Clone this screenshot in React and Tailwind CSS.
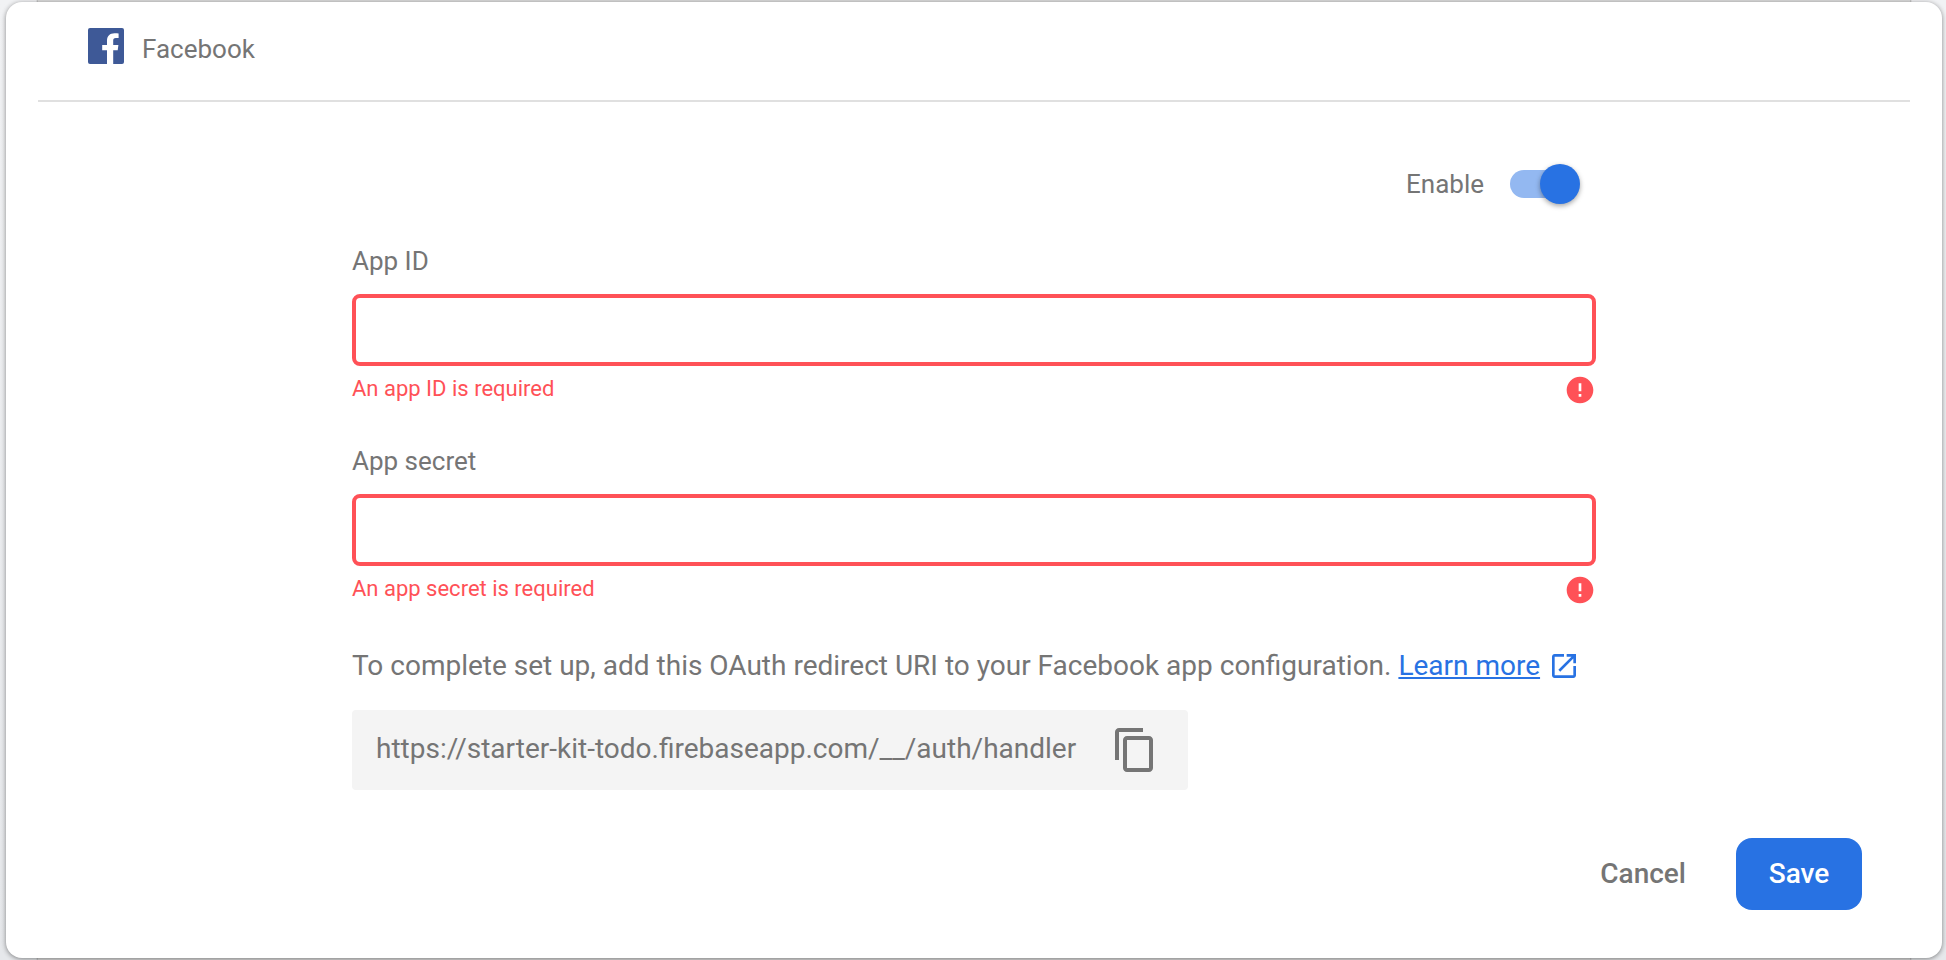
import { useId, useState } from "react";

function FacebookLogo() {
  return (
    <svg className="size-9" viewBox="0 0 36 36" aria-hidden="true">
      <rect width="36" height="36" rx="2" fill="#3e5997" />
      <path
        fill="#fff"
        d="M19 36V22.200h-4.800V17H19v-4.200C19 8 22 5.300 26.500 5.300c1.800 0 3.200.1 4.100.2v4.600h-2.700c-2.200 0-2.700 1-2.700 2.600V17h5.200l-.7 5.200h-4.500V36z"
      />
    </svg>
  );
}

function ErrorIcon() {
  return (
    <svg className="size-8 shrink-0" viewBox="0 0 24 24" fill="#ff5157" aria-hidden="true">
      <path d="M12 2C6.480 2 2 6.480 2 12s4.480 10 10 10 10-4.480 10-10S17.520 2 12 2zm1 15h-2v-2h2v2zm0-4h-2V7h2v6z" />
    </svg>
  );
}

function OpenInNewIcon() {
  return (
    <svg className="size-8 shrink-0" viewBox="0 0 24 24" fill="currentColor" aria-hidden="true">
      <path d="M19 19H5V5h7V3H5c-1.110 0-2 .9-2 2v14c0 1.100.89 2 2 2h14c1.100 0 2-.9 2-2v-7h-2v7zM14 3v2h3.590l-9.830 9.830 1.410 1.410L19 6.410V10h2V3h-7z" />
    </svg>
  );
}

function CopyIcon() {
  return (
    <svg className="size-12" viewBox="0 0 24 24" fill="currentColor" aria-hidden="true">
      <path d="M16 1H4c-1.100 0-2 .9-2 2v14h2V3h12V1zm3 4H8c-1.100 0-2 .9-2 2v14c0 1.100.9 2 2 2h11c1.100 0 2-.9 2-2V7c0-1.100-.9-2-2-2zm0 16H8V7h11v14z" />
    </svg>
  );
}

function Field({ label, error }) {
  const id = useId();
  const [value, setValue] = useState("");
  return (
    <div className="mb-[38px]">
      <label htmlFor={id} className="block text-[26px] leading-[34px]">
        {label}
      </label>
      <input
        id={id}
        type="text"
        value={value}
        onChange={(e) => setValue(e.target.value)}
        aria-invalid="true"
        aria-describedby={`${id}-error`}
        className="mt-4 block h-18 w-full rounded-lg border-4 border-[#ff5157] bg-white px-4 text-[26px] outline-none"
      />
      <div className="mt-2 flex h-8 items-start justify-between text-[#ff5157]">
        <p id={`${id}-error`} className="text-[22px] leading-[30px]">
          {error}
        </p>
        <ErrorIcon />
      </div>
    </div>
  );
}

function Toggle({ label }) {
  const [on, setOn] = useState(true);
  return (
    <label className="flex cursor-pointer items-center gap-[26px] text-[26px] leading-10">
      {label}
      <span className="relative flex h-10 w-[70px] items-center">
        <input
          type="checkbox"
          role="switch"
          checked={on}
          onChange={(e) => setOn(e.target.checked)}
          className="peer h-7 w-16 cursor-pointer appearance-none rounded-full bg-gray-300 checked:bg-[#93b8f1]"
        />
        <span className="pointer-events-none absolute left-0 top-0 size-10 rounded-full bg-white shadow-[0_2px_5px_rgba(0,0,0,0.35)] peer-checked:left-auto peer-checked:right-0 peer-checked:bg-[#2872e3]" />
      </span>
    </label>
  );
}

export default function App() {
  return (
    <div className="min-h-screen bg-[linear-gradient(#f1f2f4,#e6e8eb)] font-[Roboto,sans-serif] text-[#757575]">
      <div className="min-h-screen bg-[linear-gradient(90deg,transparent_36px,#b8b8b8_38px,#dcdcdc_38px,#dcdcdc_calc(100%-36px),#b8b8b8_calc(100%-36px),transparent_calc(100%-34px))] pb-[2px] pl-[6px] pr-1 pt-[2px]">
        <main className="flex min-h-[calc(100vh-4px)] flex-col rounded-2xl bg-white px-8 shadow-[0_1px_5px_rgba(0,0,0,0.45)]">
          <header className="flex h-[100px] items-center gap-[18px] border-b-2 border-[#e0e0e0] pb-[10px] pl-[50px]">
            <FacebookLogo />
            <h1 className="pt-[6px] text-[26px] leading-8">Facebook</h1>
          </header>

          <form className="flex flex-1 flex-col" onSubmit={(e) => e.preventDefault()}>
            <div className="mx-auto w-full max-w-[1244px] pt-[62px]">
              <div className="mb-10 flex justify-end pr-4">
                <Toggle label="Enable" />
              </div>

              <Field label="App ID" error="An app ID is required" />
              <Field label="App secret" error="An app secret is required" />

              <p className="flex items-center text-[28px] leading-11">
                <span>
                  To complete set up, add this OAuth redirect URI to your Facebook app configuration.{" "}
                  <a
                    href="#learn-more"
                    className="text-[#2872e3] underline decoration-2 underline-offset-2"
                  >
                    Learn more
                  </a>
                </span>
                <a href="#learn-more" aria-label="Open in a new window" className="ml-2 text-[#2872e3]">
                  <OpenInNewIcon />
                </a>
              </p>

              <div className="mt-[22px] flex h-20 w-fit items-center gap-[35px] rounded bg-[#f4f4f4] pl-6 pr-[29px]">
                <span className="pb-[2px] text-[28px] leading-10">
                  https://starter-kit-todo.firebaseapp.com/__/auth/handler
                </span>
                <button type="button" aria-label="Copy redirect URI" className="cursor-pointer">
                  <CopyIcon />
                </button>
              </div>
            </div>

            <div className="mt-auto flex justify-end gap-[18px] pb-12 pr-12">
              <button type="button" className="h-18 cursor-pointer rounded-2xl px-8 text-[28px] font-medium">
                Cancel
              </button>
              <button
                type="submit"
                className="h-18 min-w-[126px] cursor-pointer rounded-2xl bg-[#2872e3] px-8 text-[28px] font-medium text-white"
              >
                Save
              </button>
            </div>
          </form>
        </main>
      </div>
    </div>
  );
}
